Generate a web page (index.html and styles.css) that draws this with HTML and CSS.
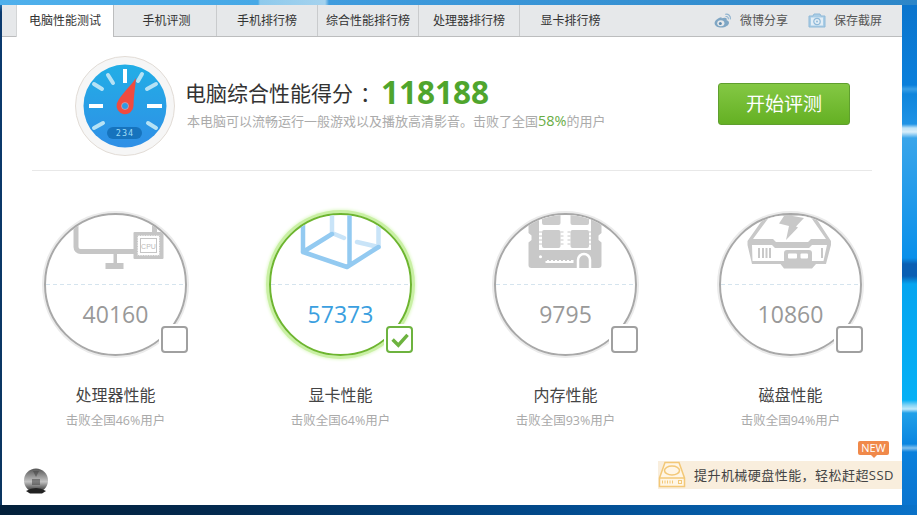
FILE: index.html
```html
<!DOCTYPE html>
<html lang="zh-CN">
<head>
<meta charset="utf-8">
<title>电脑性能测试</title>
<link rel="stylesheet" href="styles.css">
</head>
<body>
<div class="window">
  <nav class="tabbar">
    <a class="tab active">电脑性能测试</a>
    <a class="tab second">手机评测</a>
    <a class="tab">手机排行榜</a>
    <a class="tab">综合性能排行榜</a>
    <a class="tab">处理器排行榜</a>
    <a class="tab">显卡排行榜</a>
    <div class="tools">
      <a class="tool">
        <svg class="tool-icon" viewBox="0 0 18 15"><path d="M7.500 4.200C4 4.800 .6 7.600 .6 10.200c0 2.700 3.200 4.300 6.700 4.300 4.100 0 7.700-2.200 7.700-4.800 0-1.500-1.300-2.200-2.400-2.500.5-1.300.2-2.500-1.800-2.500-1 0-2 .4-3.300.5Z" fill="#7fa6c4"/><ellipse cx="6.800" cy="10.300" rx="3.600" ry="3" fill="#e6e8ea"/><circle cx="6.300" cy="10.400" r="1.500" fill="#5f8cb0"/><path d="M11.500 1.200c2.800-.6 5.400 1.800 4.900 4.800M11.900 3.500c1.400-.3 2.700.9 2.400 2.400" fill="none" stroke="#8fb3cf" stroke-width="1.100" stroke-linecap="round"/></svg>
        微博分享
      </a>
      <a class="tool">
        <svg class="tool-icon" viewBox="0 0 18 15"><path d="M1 3h4l1-2h6l1 2h4v11H1Z" fill="#a9cde6" stroke="#8fb9d8"/><rect x="3" y="4.500" width="12" height="8" fill="#e3eef6"/><circle cx="9" cy="8.500" r="3.200" fill="none" stroke="#8fb9d8" stroke-width="1.200"/><circle cx="9" cy="8.500" r="1" fill="#8fb9d8"/></svg>
        保存截屏
      </a>
    </div>
  </nav>

  <section class="summary">
    <svg class="gauge" viewBox="0 0 100 100">
      <defs>
        <linearGradient id="face" x1="0" y1="0" x2="0" y2="1">
          <stop offset="0" stop-color="#22aee6"/><stop offset="1" stop-color="#2f8fe6"/>
        </linearGradient>
      </defs>
      <circle cx="50" cy="50" r="49.500" fill="#f6f6f6" stroke="#e2dcd6"/>
      <circle cx="50" cy="50" r="41.500" fill="url(#face)"/>
      <g stroke-width="4">
        <path d="M50 13v14M14 50h14M72 50h15" stroke="#fff"/>
        <path d="M19 28l8 5M33 19l5 8M67 18l-4 7M81 28l-9 5M19 72l9-5M81 72l-8-5" stroke="#b5e2f5" stroke-linecap="round"/>
      </g>
      <path d="M61 22C60 33 58.500 42 58.500 50A8.500 8.500 0 1 1 41.800 47.500C46 38 55 31 61 22Z" fill="#f04b3f"/>
      <circle cx="50" cy="50" r="3.500" fill="#2c9be4" stroke="#f8a9a0" stroke-width=".6"/>
      <rect x="32" y="71" width="35" height="12" rx="6" fill="#1673bd"/>
      <text class="gauge-num" x="50" y="80.200" text-anchor="middle">234</text>
    </svg>
    <div class="score">
      <h1 class="score-title">电脑综合性能得分<span class="colon">：</span><b class="score-num">118188</b></h1>
      <p class="score-sub">本电脑可以流畅运行一般游戏以及播放高清影音。击败了全国<em class="pct">58%</em>的用户</p>
    </div>
    <button class="start">开始评测</button>
  </section>

  <section class="cards">
    <article class="card">
      <div class="dial">
        <div class="dial-clip">
          <svg class="art" viewBox="0 0 130 62">
            <path d="M25 0V32a4.500 4.500 0 0 0 4.500 4.500H84M103.500 0V20" fill="none" stroke="#c6c6c6" stroke-width="5"/>
            <rect x="62.500" y="38" width="3.500" height="11" fill="#c6c6c6"/>
            <rect x="54.500" y="48" width="18" height="6" fill="#c6c6c6"/>
            <rect x="82.500" y="17" width="30" height="27" rx="1" fill="#c6c6c6"/>
            <rect x="86.500" y="20.500" width="22" height="20" fill="#fff"/>
            <rect x="86.500" y="20.500" width="22" height="20" fill="none" stroke="#c6c6c6" stroke-dasharray="1 1.500"/>
            <rect x="89.500" y="23.500" width="16" height="14" fill="none" stroke="#c6c6c6"/>
            <text class="cpu" x="97.500" y="33.500" text-anchor="middle">CPU</text>
          </svg>
        </div>
        <div class="score-val">40160</div>
        <span class="check"></span>
      </div>
      <h2 class="card-name">处理器性能</h2>
      <p class="card-sub">击败全国46%用户</p>
    </article>

    <article class="card on">
      <div class="dial">
        <div class="dial-clip">
          <svg class="art" viewBox="0 0 130 62">
            <g fill="none" stroke-width="4.500" stroke-linecap="round" stroke-linejoin="round">
              <path d="M56-10V18M56 18 68 23M81 27 102.500 32M102.500-10V32" stroke="#c9e4f8"/>
              <path d="M27-10V37L71 52 102.500 32M27 37 56 19M73.500-10V50" stroke="#93caf1"/>
            </g>
          </svg>
        </div>
        <div class="score-val">57373</div>
        <span class="check">
          <svg viewBox="0 0 20 20"><path d="M4 10l5 5 8-9" fill="none" stroke="#6db33f" stroke-width="3"/></svg>
        </span>
      </div>
      <h2 class="card-name">显卡性能</h2>
      <p class="card-sub">击败全国64%用户</p>
    </article>

    <article class="card">
      <div class="dial">
        <div class="dial-clip">
          <svg class="art" viewBox="0 0 130 62">
            <path d="M27.500-5h73V18l-3 2.500V25l3 2.500V50a3 3 0 0 1-3 3H30.500a3 3 0 0 1-3-3V27.500l3-2.500V20.500l-3-2.500Z" fill="#c8c8c8"/>
            <rect x="38" y="-5" width="52" height="40" fill="#fff"/>
            <g fill="#cccccc">
              <rect x="41" y="-5" width="18.500" height="15" rx="2"/>
              <rect x="69.500" y="-5" width="18.500" height="15" rx="2"/>
              <rect x="41" y="15" width="18.500" height="18" rx="2"/>
              <rect x="69.500" y="15" width="18.500" height="18" rx="2"/>
            </g>
            <path d="M38 17h3M38 21h3M38 25h3M38 29h3M59.500 17h3M59.500 21h3M59.500 25h3M59.500 29h3M66.500 17h3M66.500 21h3M66.500 25h3M66.500 29h3M88 17h3M88 21h3M88 25h3M88 29h3" stroke="#c8c8c8"/>
            <g fill="#fff">
              <circle cx="39.500" cy="41.700" r="1.500"/>
              <rect x="44.500" y="45" width="28" height="3"/>
            </g>
            <path d="M45 44v2M49 44v2M53 44v2M57 44v2M61 44v2M65 44v2M69 44v2" stroke="#c8c8c8" stroke-width="2"/>
            <path d="M77 53V45a6 6 0 0 1 12 0v8" fill="none" stroke="#fff" stroke-width="2.500"/>
          </svg>
        </div>
        <div class="score-val">9795</div>
        <span class="check"></span>
      </div>
      <h2 class="card-name">内存性能</h2>
      <p class="card-sub">击败全国93%用户</p>
    </article>

    <article class="card">
      <div class="dial">
        <div class="dial-clip">
          <svg class="art" viewBox="0 0 130 62">
            <path d="M42-3H86L105 26v4L100 49H90L86 53.500H58L54.500 49H26L21.500 30V26Z" fill="#c8c8c8"/>
            <path d="M44 1H84L100 24H85L82 27H50L47 24H27Z" fill="#fff"/>
            <path d="M26 30H46L49 33H83L86 30H101L97.500 46H26.500Z" fill="#fff"/>
            <path d="M50-2 78 3 70 11.500 72 12.500 60 25 63 11 53 8.500 58 1Z" fill="#c8c8c8"/>
            <path d="M33 33v10M37 33v10M40.500 33v10M44 33v10M96 33v10" stroke="#c8c8c8" stroke-width="2"/>
            <rect x="58" y="35" width="28" height="13" rx="3" fill="#c8c8c8"/>
            <rect x="62" y="38.500" width="9" height="5" rx="1" fill="#fff"/>
            <rect x="74.500" y="38.500" width="7.500" height="5" rx="1" fill="#fff"/>
          </svg>
        </div>
        <div class="score-val">10860</div>
        <span class="check"></span>
      </div>
      <h2 class="card-name">磁盘性能</h2>
      <p class="card-sub">击败全国94%用户</p>
    </article>
  </section>

  <svg class="avatar" viewBox="0 0 26 26">
    <defs>
      <linearGradient id="av" x1="0" y1="0" x2="0" y2="1">
        <stop offset="0" stop-color="#555"/><stop offset=".55" stop-color="#c4c4c4"/><stop offset=".85" stop-color="#555"/><stop offset="1" stop-color="#222"/>
      </linearGradient>
    </defs>
    <circle cx="13" cy="12.500" r="12" fill="url(#av)"/>
    <path d="M10 3h6l-3 6ZM9 11h8v6H9Z" fill="#444" opacity=".55"/>
    <path d="M3 23q10-6 20 0l-4 2.500H7Z" fill="#222"/>
  </svg>

  <div class="promo">
    <span class="new">NEW</span>
    <svg class="promo-icon" viewBox="0 0 28 27">
      <path d="M7 1.500H21L26.500 17V25.500H1.500V17Z" fill="#fff6e6" stroke="#f3c877" stroke-width="1.500"/>
      <path d="M2 17H26" stroke="#f3c877" stroke-width="1.500"/>
      <ellipse cx="14" cy="9.500" rx="7.500" ry="4.500" fill="none" stroke="#f3c877" stroke-width="1.500"/>
      <path d="M4.500 19.500v3M7 19.500v3M9.500 19.500v3M12 19.500v3M14.500 19.500v3" stroke="#f3c877"/>
      <rect x="20.500" y="19.500" width="3" height="3" fill="none" stroke="#f3c877"/>
    </svg>
    <span class="promo-text">提升机械硬盘性能，轻松赶超SSD</span>
  </div>
</div>
</body>
</html>
```

FILE: styles.css
```css
* { box-sizing: border-box; }
html, body { margin: 0; height: 100%; }
body {
  width: 917px;
  height: 515px;
  overflow: hidden;
  padding: 5px 15px 10px 2px;
  font-family: "Open Sans", "Noto Sans CJK SC", sans-serif;
  background-color: #0a72cc;
  background-repeat: no-repeat;
  background-image:
    linear-gradient(90deg, #4fb0ec 0, #46a8e6 258px, #8fcaec 260px, #a4d2ee 325px, #3f9cde 329px, #2d86c8 100%),
    linear-gradient(90deg, #03203a 0, #032a50 25%, #024a8c 60%, #0a72c8 100%),
    linear-gradient(180deg, #2d8fd8 0, #0b3a6e 12px, #0a3560 100%),
    linear-gradient(180deg,
      #0b74cc 0, #0a7fdb 85px, #3a9fe6 89px, #0f85dc 94px, #1f93e5 124px, #bfe3f7 128px, #d8eefa 132px, #3aa5ea 138px,
      #0a90ea 258px, #0a5fb3 264px, #0a5fb3 276px, #05a5f0 284px, #05b0f5 400px, #7fd2f5 405px, #bfe8fa 409px,
      #20a0e8 413px, #0a85e0 444px, #7fbfee 448px, #0a80dc 452px, #0a72cc 515px);
  background-size: 100% 5px, 100% 10px, 2px 100%, 15px 100%;
  background-position: 0 0, 0 100%, 0 0, 100% 0;
}
.window {
  position: relative;
  width: 900px;
  height: 500px;
  background: #fff;
  display: flex;
  flex-direction: column;
}

/* tabs */
.tabbar {
  display: flex;
  height: 32px;
  padding-left: 14px;
  background: #e6e8ea;
  border-bottom: 1px solid #bcbdbe;
  font-size: 12px;
  color: #333;
}
.tab {
  width: 101px;
  height: 31px;
  line-height: 31px;
  text-align: center;
  position: relative;
  white-space: nowrap;
  border-right: 1px solid #c9cbcd;
}
.tab:last-of-type { border-right: 0; }
.tab.second { width: 103px; padding-left: 3px; }
.tab.active {
  width: 98px;
  height: 32px;
  background: #fff;
  border-left: 1px solid #d3d5d6;
  border-right: 1px solid #bcbdbe;
  z-index: 1;
}
.tools {
  margin-left: auto;
  display: flex;
  gap: 20px;
  padding-right: 20px;
  color: #555;
  line-height: 30px;
}
.tool { display: flex; align-items: center; gap: 8px; }
.tool-icon { width: 18px; height: 15px; }

/* summary */
.summary {
  display: flex;
  align-items: flex-start;
  margin: 0 30px;
  height: 134px;
  padding: 19px 0 0 43px;
  border-bottom: 1px solid #e8e8e8;
}
.gauge { width: 100px; height: 100px; flex: none; }
.gauge-num {
  font-family: "DejaVu Sans Mono", monospace;
  font-size: 8.500px;
  fill: #9fdcf5;
  letter-spacing: 1px;
}
.score { margin-left: 10px; flex: none; width: 533px; padding-top: 16px; }
.score-title {
  margin: 0;
  font-size: 21px;
  font-weight: 400;
  color: #333;
  line-height: 40px;
  height: 40px;
  white-space: nowrap;
}
.colon { margin-left: 7px; }
.score-num {
  font-size: 31.500px;
  font-weight: 700;
  color: #4fa52d;
  vertical-align: -3px;
}
.score-sub {
  margin: -1px 0 0;
  padding-left: 2px;
  font-size: 13px;
  color: #ababab;
  line-height: 20px;
  white-space: nowrap;
}
.pct { font-style: normal; font-size: 14.500px; color: #69ad45; }
.start {
  width: 132px;
  height: 42px;
  margin-top: 27px;
  padding: 0 0 2px;
  border: 1px solid #5f9f2e;
  border-radius: 3px;
  background: linear-gradient(180deg, #84c844 0, #64b023 100%);
  color: #fff;
  font-family: inherit;
  font-size: 19px;
  flex: none;
}

/* cards */
.cards {
  display: grid;
  grid-template-columns: repeat(4, 225px);
  padding-left: 1px;
  margin-top: 42px;
}
.card { display: flex; flex-direction: column; align-items: center; }
.dial {
  position: relative;
  width: 143px;
  height: 143px;
  border-radius: 50%;
  border: 2px solid #a8a8a8;
  box-shadow: 0 0 0 2px #ebebeb;
  background: repeating-linear-gradient(90deg, #d5e4ee 0 4px, transparent 4px 7px) 0 69px / 100% 1px no-repeat;
}
.dial-clip {
  position: absolute;
  left: 0; top: 0; right: 0;
  height: 69px;
  overflow: hidden;
  border-radius: 70px 70px 0 0;
}
.art { display: block; width: 130px; height: 62px; margin: 0 auto; }
.cpu { font-family: "Liberation Sans", sans-serif; font-size: 7px; fill: #bbb; }
.score-val {
  position: absolute;
  left: 0; right: 0; top: 85px;
  text-align: center;
  font-size: 23px;
  line-height: 28px;
  color: #999;
}
.check {
  position: absolute;
  left: 115px;
  top: 111px;
  width: 27px;
  height: 27px;
  border: 2px solid #a0a0a0;
  border-radius: 4px;
  background: #fff;
  box-shadow: 0 0 0 2px #fff;
}
.check svg { display: block; width: 23px; height: 23px; }
.card-name {
  margin: 28px 0 0;
  font-size: 16px;
  font-weight: 400;
  line-height: 22px;
  color: #444;
}
.card-sub {
  margin: 6px 0 0;
  font-size: 12.500px;
  line-height: 18px;
  color: #aaa;
}
.card.on .dial {
  border-color: #6db52f;
  box-shadow: 0 0 0 3px #c9f0a4, 0 0 3px 4px #e4f9d0;
}
.card.on .score-val { color: #3b9fe0; }
.card.on .check { border-color: #6db33f; }

/* corner items */
.avatar {
  position: absolute;
  left: 21px;
  top: 463px;
  width: 26px;
  height: 26px;
}
.promo {
  position: absolute;
  right: 0;
  top: 456px;
  width: 244px;
  height: 28px;
  background: #f9eedd;
  display: flex;
  align-items: center;
  padding: 0 0 2px 36px;
}
.promo-icon {
  position: absolute;
  left: 0;
  top: 0;
  width: 28px;
  height: 27px;
}
.promo-text {
  font-size: 13px;
  color: #444;
  white-space: nowrap;
  letter-spacing: .45px;
}
.new {
  position: absolute;
  left: 200px;
  top: -20px;
  width: 31px;
  height: 14px;
  background: #f0894a;
  border-radius: 2px;
  color: #fff;
  font-size: 11px;
  line-height: 14px;
  text-align: center;
}
.new::after {
  content: "";
  position: absolute;
  left: 13px;
  top: 14px;
  border: 3px solid transparent;
  border-top-color: #f0894a;
  border-bottom: 0;
}
```
